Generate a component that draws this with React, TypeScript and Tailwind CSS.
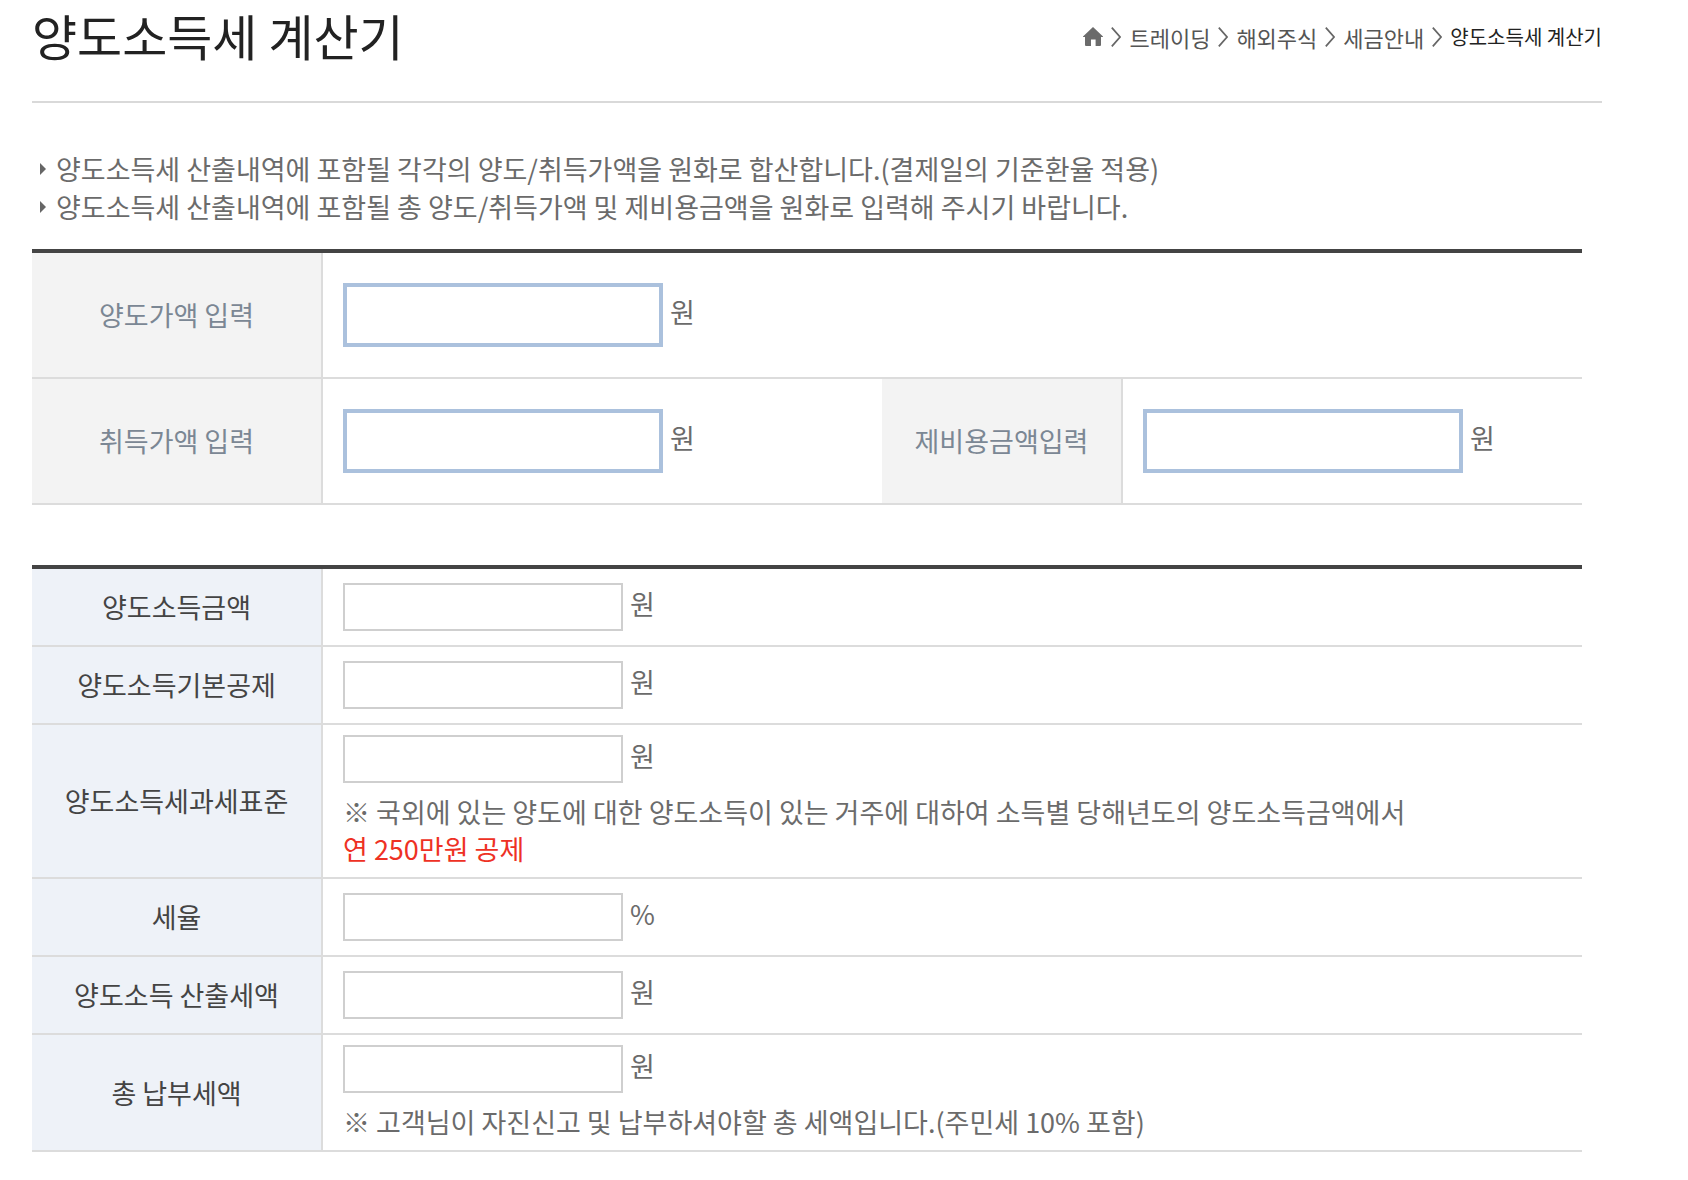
import { Fragment } from 'react'
import type { ReactNode } from 'react'
import clsx from 'clsx'

const CRUMBS = ['트레이딩', '해외주식', '세금안내']

const NOTICES = [
  '양도소득세 산출내역에 포함될 각각의 양도/취득가액을 원화로 합산합니다.(결제일의 기준환율 적용)',
  '양도소득세 산출내역에 포함될 총 양도/취득가액 및 제비용금액을 원화로 입력해 주시기 바랍니다.',
]

type ResultRow = {
  id: string
  label: string
  unit: string
  note?: ReactNode
}

const RESULT_ROWS: ResultRow[] = [
  { id: 'gain', label: '양도소득금액', unit: '원' },
  { id: 'deduction', label: '양도소득기본공제', unit: '원' },
  {
    id: 'tax-base',
    label: '양도소득세과세표준',
    unit: '원',
    note: (
      <>
        ※ 국외에 있는 양도에 대한 양도소득이 있는 거주에 대하여 소득별 당해년도의 양도소득금액에서
        <br />
        <span className="text-[#ee3124]">연 250만원 공제</span>
      </>
    ),
  },
  { id: 'rate', label: '세율', unit: '%' },
  { id: 'computed-tax', label: '양도소득 산출세액', unit: '원' },
  {
    id: 'total-tax',
    label: '총 납부세액',
    unit: '원',
    note: '※ 고객님이 자진신고 및 납부하셔야할 총 세액입니다.(주민세 10% 포함)',
  },
]

function HomeIcon() {
  return (
    <svg viewBox="0 0 20 19" className="h-[19px] w-5" fill="#6b6b6b" aria-hidden="true">
      <path d="M10 0 20 9.4V10h-2v8a1 1 0 0 1-1 1h-4.4v-6.4H8V19H3a1 1 0 0 1-1-1v-8H0v-.6Z" />
    </svg>
  )
}

function Chevron() {
  return (
    <svg
      viewBox="0 0 10 20"
      className="mx-2 h-5 w-[10px]"
      fill="none"
      stroke="#666"
      strokeWidth="1.7"
      aria-hidden="true"
    >
      <path d="M.8.6 9 10 .8 19.4" />
    </svg>
  )
}

function Breadcrumb() {
  return (
    <nav className="flex items-center pt-1 text-[22px] text-[#555]" aria-label="현재 위치">
      <a href="#home" aria-label="홈">
        <HomeIcon />
      </a>
      {CRUMBS.map((crumb) => (
        <Fragment key={crumb}>
          <Chevron />
          <a href="#menu">{crumb}</a>
        </Fragment>
      ))}
      <Chevron />
      <span className="text-xl text-[#222]" aria-current="page">
        양도소득세 계산기
      </span>
    </nav>
  )
}

function HeadCell({ id, tone, children }: { id: string; tone: 'input' | 'result'; children: ReactNode }) {
  return (
    <th
      scope="row"
      className={clsx(
        'border-r-2 border-b-2 border-[#dcdcdc] text-center font-normal',
        tone === 'input' ? 'bg-[#f3f3f3] text-[#7b8794]' : 'bg-[#eef2f8] text-[#444]'
      )}
    >
      <label htmlFor={id}>{children}</label>
    </th>
  )
}

function Field({ id, unit, tone }: { id: string; unit: string; tone: 'input' | 'result' }) {
  return (
    <div className="flex items-center gap-[7px]">
      <input
        id={id}
        type="text"
        inputMode="numeric"
        readOnly={tone === 'result'}
        className={clsx(
          'bg-white px-3 text-right outline-none',
          tone === 'input' ? 'h-16 w-80 border-4 border-[#abc1dd]' : 'h-12 w-[280px] border-2 border-[#cfcfcf]'
        )}
      />
      <span className="pb-[6px]">{unit}</span>
    </div>
  )
}

export default function App() {
  return (
    <main className="bg-white pr-[86px] pb-7 pl-8 font-['Noto_Sans_CJK_KR','Noto_Sans_CJK_SC',sans-serif] text-[27px] leading-[38px] text-[#6b6b6b]">
      <header className="flex items-center justify-between border-b-2 border-[#d9d9d9] pb-8">
        <h1 className="text-[49px] leading-[69px] text-[#222]">양도소득세 계산기</h1>
        <Breadcrumb />
      </header>

      <ul className="mt-[47px] pl-2">
        {NOTICES.map((notice) => (
          <li key={notice} className="flex items-center gap-[10px]">
            <svg viewBox="0 0 6 12" className="h-3 w-[6px] shrink-0" fill="#666" aria-hidden="true">
              <path d="M0 0 6 6 0 12Z" />
            </svg>
            {notice}
          </li>
        ))}
      </ul>

      <form className="pr-5">
        <table className="mt-[23px] w-full table-fixed border-separate border-spacing-0 border-t-4 border-[#444]">
          <colgroup>
            <col className="w-[291px]" />
            <col />
            <col className="w-[241px]" />
            <col className="w-[459px]" />
          </colgroup>
          <tbody>
            <tr>
              <HeadCell id="sell-price" tone="input">
                양도가액 입력
              </HeadCell>
              <td colSpan={3} className="border-b-2 border-[#dcdcdc] px-5 py-[30px]">
                <Field id="sell-price" unit="원" tone="input" />
              </td>
            </tr>
            <tr>
              <HeadCell id="buy-price" tone="input">
                취득가액 입력
              </HeadCell>
              <td className="border-b-2 border-[#dcdcdc] px-5 py-[30px]">
                <Field id="buy-price" unit="원" tone="input" />
              </td>
              <HeadCell id="expenses" tone="input">
                제비용금액입력
              </HeadCell>
              <td className="border-b-2 border-[#dcdcdc] px-5 py-[30px]">
                <Field id="expenses" unit="원" tone="input" />
              </td>
            </tr>
          </tbody>
        </table>

        <table className="mt-[60px] w-full table-fixed border-separate border-spacing-0 border-t-4 border-[#444]">
          <colgroup>
            <col className="w-[291px]" />
            <col />
          </colgroup>
          <tbody>
            {RESULT_ROWS.map((row) => (
              <tr key={row.id}>
                <HeadCell id={row.id} tone="result">
                  {row.label}
                </HeadCell>
                <td
                  className={clsx('border-b-2 border-[#dcdcdc] px-5', row.note ? 'py-[10px]' : 'py-[14px]')}
                >
                  <Field id={row.id} unit={row.unit} tone="result" />
                  {row.note && <p className="mt-[10px] leading-[37px]">{row.note}</p>}
                </td>
              </tr>
            ))}
          </tbody>
        </table>
      </form>
    </main>
  )
}
